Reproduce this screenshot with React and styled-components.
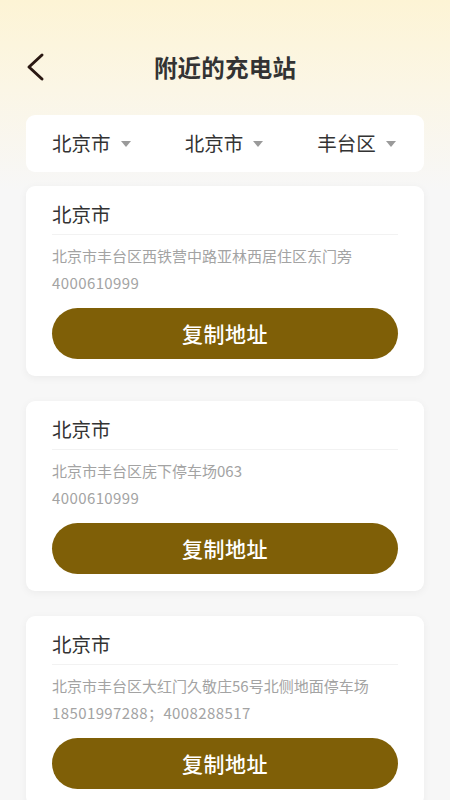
import React from 'react'
import styled, { createGlobalStyle } from 'styled-components'

const GlobalStyle = createGlobalStyle`
    html, body {
        margin: 0;
        padding: 0;
    }
    body {
        background: linear-gradient(180deg, #fdf4d5 0px, #fbf6e6 90px, #f7f7f7 190px, #f7f7f7 100%);
        background-repeat: no-repeat;
        background-color: #f7f7f7;
        min-height: 800px;
        font-family: "Noto Sans CJK SC", "Noto Sans", sans-serif;
    }
`

const Page = styled.div`
    width: 450px;
    min-height: 800px;
    overflow: hidden;
`

const Header = styled.div`
    display: grid;
    grid-template-columns: 1fr auto 1fr;
    align-items: center;
    height: 48px;
    padding-top: 43px;
`

const BackButton = styled.div`
    padding-left: 25px;
    display: flex;
    align-items: center;
`

const Title = styled.h1`
    margin: 0;
    font-size: 23.5px;
    font-weight: 600;
    color: #333;
    letter-spacing: 0.2px;
`

const FilterBar = styled.div`
    margin: 24px 26px 0;
    height: 57px;
    background: #fff;
    border-radius: 9px;
    display: grid;
    grid-template-columns: repeat(3, 1fr);
`

const FilterItem = styled.div`
    display: flex;
    align-items: center;
    padding-left: 26px;
    padding-bottom: 2px;
    font-size: 19.5px;
    color: #333;
    gap: 10px;
`

const Caret = styled.span`
    width: 0;
    height: 0;
    border-left: 5.5px solid transparent;
    border-right: 5.5px solid transparent;
    border-top: 6px solid #9a9a9a;
    margin-top: 2px;
`

const List = styled.div`
    display: flex;
    flex-direction: column;
    gap: 25px;
    margin: 14px 26px 0;
`

const Card = styled.div`
    background: #fff;
    border-radius: 9px;
    padding: 14px 26px 17px;
    box-shadow: 0 2px 8px rgba(0, 0, 0, 0.05);
`

const CardTitle = styled.div`
    font-size: 19.5px;
    line-height: 28px;
    color: #333;
    padding-bottom: 6px;
    border-bottom: 1px solid #f2f2f2;
`

const Info = styled.div`
    padding-top: 7px;
    font-size: 15px;
    line-height: 27px;
    color: #a3a3a3;
`

const Phone = styled.div`
    letter-spacing: 0.4px;
`

const CopyButton = styled.button`
    display: block;
    width: 100%;
    height: 51px;
    margin-top: 12px;
    padding: 0 0 1px;
    border: none;
    border-radius: 26px;
    background: #7f5f07;
    color: #fff;
    font-family: inherit;
    font-size: 21px;
    font-weight: 500;
    letter-spacing: 0.5px;
    cursor: pointer;
`

const stations = [
    { city: '北京市', address: '北京市丰台区西铁营中路亚林西居住区东门旁', phone: '4000610999' },
    { city: '北京市', address: '北京市丰台区庑下停车场063', phone: '4000610999' },
    { city: '北京市', address: '北京市丰台区大红门久敬庄56号北侧地面停车场', phone: '18501997288；4008288517' },
]

const App = () => (
    <Page>
        <GlobalStyle />
        <Header>
            <BackButton>
                <svg width="22" height="30" viewBox="0 0 22 30">
                    <polyline points="17,3 4,15 17,27" fill="none" stroke="#2a1812" strokeWidth="3" strokeLinecap="round" strokeLinejoin="round" />
                </svg>
            </BackButton>
            <Title>附近的充电站</Title>
            <div />
        </Header>
        <FilterBar>
            <FilterItem>北京市<Caret /></FilterItem>
            <FilterItem>北京市<Caret /></FilterItem>
            <FilterItem>丰台区<Caret /></FilterItem>
        </FilterBar>
        <List>
            {stations.map((s, i) => (
                <Card key={i}>
                    <CardTitle>{s.city}</CardTitle>
                    <Info>
                        <div>{s.address}</div>
                        <Phone>{s.phone}</Phone>
                    </Info>
                    <CopyButton>复制地址</CopyButton>
                </Card>
            ))}
        </List>
    </Page>
)

export default App
